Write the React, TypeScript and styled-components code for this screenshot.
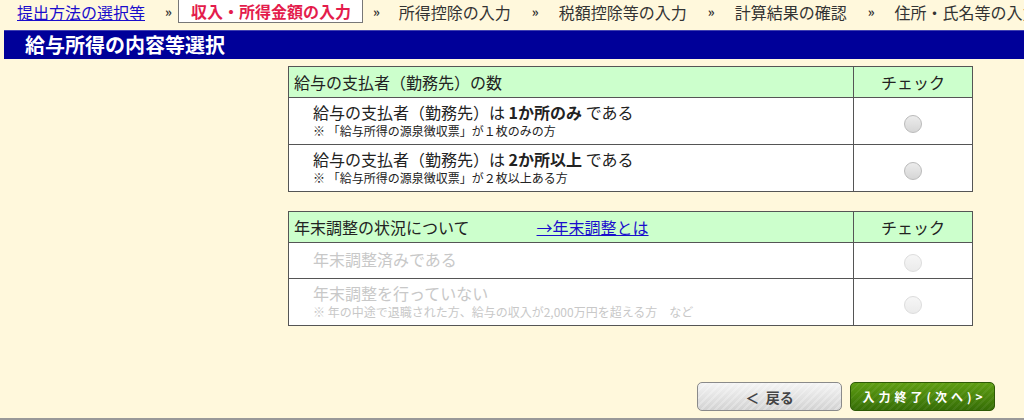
import styled, { createGlobalStyle } from 'styled-components'

const GlobalStyle = createGlobalStyle`
  html, body {
    margin: 0;
    padding: 0;
    background: #fff8dc;
    font-family: "Noto Sans CJK JP", "Noto Sans", sans-serif;
    color: #222;
  }
`

const steps = ['所得控除の入力', '税額控除等の入力', '計算結果の確認', '住所・氏名等の入力']

type Option = {
  main: React.ReactNode
  note?: string
  disabled?: boolean
}

const payerOptions: Option[] = [
  {
    main: (
      <>
        給与の支払者（勤務先）は <b>1か所のみ</b> である
      </>
    ),
    note: '※ 「給与所得の源泉徴収票」が１枚のみの方',
  },
  {
    main: (
      <>
        給与の支払者（勤務先）は <b>2か所以上</b> である
      </>
    ),
    note: '※ 「給与所得の源泉徴収票」が２枚以上ある方',
  },
]

const adjustOptions: Option[] = [
  { main: '年末調整済みである', disabled: true },
  {
    main: '年末調整を行っていない',
    note: '※ 年の中途で退職された方、給与の収入が2,000万円を超える方　など',
    disabled: true,
  },
]

const App = () => {
  return (
    <Page>
      <GlobalStyle />
      <Breadcrumb>
        <CrumbLink href="#">提出方法の選択等</CrumbLink>
        <Sep $before={20} $after={6}>»</Sep>
        <Current>収入・所得金額の入力</Current>
        {steps.map((s, i) => (
          <Step key={s}>
            <Sep $before={i === 0 ? 10 : 21} $after={i === 0 ? 19 : 20}>»</Sep>
            {s}
          </Step>
        ))}
      </Breadcrumb>

      <TitleBar>給与所得の内容等選択</TitleBar>

      <Content>
        <ChoiceTable>
          <thead>
            <tr>
              <HeadCell>給与の支払者（勤務先）の数</HeadCell>
              <CheckHead>チェック</CheckHead>
            </tr>
          </thead>
          <tbody>
            {payerOptions.map((o, i) => (
              <OptionRow key={i} option={o} height={47} />
            ))}
          </tbody>
        </ChoiceTable>

        <ChoiceTable>
          <thead>
            <tr>
              <HeadCell>
                年末調整の状況について
                <HelpLink href="#">→年末調整とは</HelpLink>
              </HeadCell>
              <CheckHead>チェック</CheckHead>
            </tr>
          </thead>
          <tbody>
            {adjustOptions.map((o, i) => (
              <OptionRow key={i} option={o} height={i === 0 ? 36 : 47} />
            ))}
          </tbody>
        </ChoiceTable>
      </Content>

      <Buttons>
        <BackButton>＜&nbsp;&nbsp;戻る</BackButton>
        <NextButton>入力終了(次へ)&gt;</NextButton>
      </Buttons>
      <BottomLine />
    </Page>
  )
}

const OptionRow = ({ option, height }: { option: Option; height: number }) => (
  <tr style={{ height }}>
    <BodyCell $disabled={option.disabled}>
      <MainText>{option.main}</MainText>
      {option.note && <Note>{option.note}</Note>}
    </BodyCell>
    <RadioCell>
      <Radio $disabled={option.disabled} />
    </RadioCell>
  </tr>
)

const Page = styled.div`
  width: 1024px;
  height: 420px;
  display: flex;
  flex-direction: column;
  overflow: hidden;
`

const Breadcrumb = styled.div`
  display: flex;
  align-items: center;
  height: 23px;
  padding-left: 17px;
  font-size: 16px;
  color: #333;
  white-space: nowrap;
`

const CrumbLink = styled.a`
  color: #1a0dcc;
  text-decoration: underline;
`

const Sep = styled.span<{ $before: number; $after: number }>`
  font-size: 13px;
  font-weight: bold;
  margin: 0 ${(p) => p.$after}px 0 ${(p) => p.$before}px;
`

const Step = styled.span`
  display: flex;
  align-items: center;
`

const Current = styled.span`
  display: flex;
  align-items: center;
  height: 24px;
  margin-top: -1px;
  padding: 0 11px 0 12px;
  background: #fff;
  border: 1px solid #777;
  box-sizing: border-box;
  color: #e41c4c;
  font-weight: bold;
`

const TitleBar = styled.div`
  margin: 7px 0 0 4px;
  height: 29px;
  background: #000099;
  border-top: 1px solid #4040b0;
  color: #fff;
  font-size: 20px;
  font-weight: bold;
  line-height: 27px;
  padding-left: 21px;
  box-sizing: border-box;
`

const Content = styled.div`
  margin: 7px 0 0 288px;
  width: 685px;
  display: flex;
  flex-direction: column;
  gap: 19px;
`

const ChoiceTable = styled.table`
  width: 100%;
  border-collapse: collapse;
  border: 1px solid #555;
  background: #fff;
`

const HeadCell = styled.th`
  height: 30px;
  padding: 0 5px;
  background: #ccffcc;
  border: 1px solid #555;
  text-align: left;
  font-weight: normal;
  font-size: 16px;
`

const CheckHead = styled(HeadCell)`
  width: 118px;
  text-align: center;
  padding: 0;
`

const HelpLink = styled.a`
  margin-left: 67px;
  color: #1a0dcc;
  text-decoration: underline;
`

const BodyCell = styled.td<{ $disabled?: boolean }>`
  border: 1px solid #555;
  padding: 0 5px 2px 24px;
  vertical-align: middle;
  color: ${(p) => (p.$disabled ? '#c8c8c8' : '#222')};
`

const MainText = styled.div`
  font-size: 16px;
  line-height: 21px;
  b {
    font-weight: bold;
    color: inherit;
  }
`

const Note = styled.div`
  font-size: 12px;
  line-height: 16px;
`

const RadioCell = styled.td`
  border: 1px solid #555;
  text-align: center;
  vertical-align: middle;
`

const Radio = styled.span<{ $disabled?: boolean }>`
  display: inline-block;
  width: 18px;
  height: 18px;
  border-radius: 50%;
  border: 1px solid ${(p) => (p.$disabled ? '#ddd' : '#bbb')};
  background: ${(p) =>
    p.$disabled
      ? 'linear-gradient(#f6f6f6, #ebebeb)'
      : 'linear-gradient(#ececec, #d6d6d6)'};
  box-sizing: border-box;
  vertical-align: middle;
`

const Buttons = styled.div`
  display: flex;
  justify-content: flex-end;
  gap: 8px;
  margin-top: auto;
  padding-right: 29px;
  margin-bottom: 7px;
`

const ButtonBase = styled.button`
  width: 145px;
  height: 29px;
  border-radius: 5px;
  font-family: "Noto Sans CJK JP", sans-serif;
  font-weight: bold;
  cursor: pointer;
  padding: 0;
`

const BackButton = styled(ButtonBase)`
  border: 1px solid #8a8a8a;
  color: #444;
  font-size: 14px;
  background: repeating-linear-gradient(
      135deg,
      rgba(255, 255, 255, 0.25) 0 2px,
      rgba(0, 0, 0, 0) 2px 5px
    ),
    linear-gradient(#f4f4f4, #d2d2d2);
`

const NextButton = styled(ButtonBase)`
  border: 1px solid #2d5a06;
  color: #fff;
  font-size: 12px;
  letter-spacing: 4px;
  padding-left: 4px;
  background: repeating-linear-gradient(
      135deg,
      rgba(255, 255, 255, 0.06) 0 2px,
      rgba(0, 0, 0, 0) 2px 5px
    ),
    linear-gradient(#5e9e12, #356d06);
`

const BottomLine = styled.div`
  height: 2px;
  background: #999;
`

export default App
